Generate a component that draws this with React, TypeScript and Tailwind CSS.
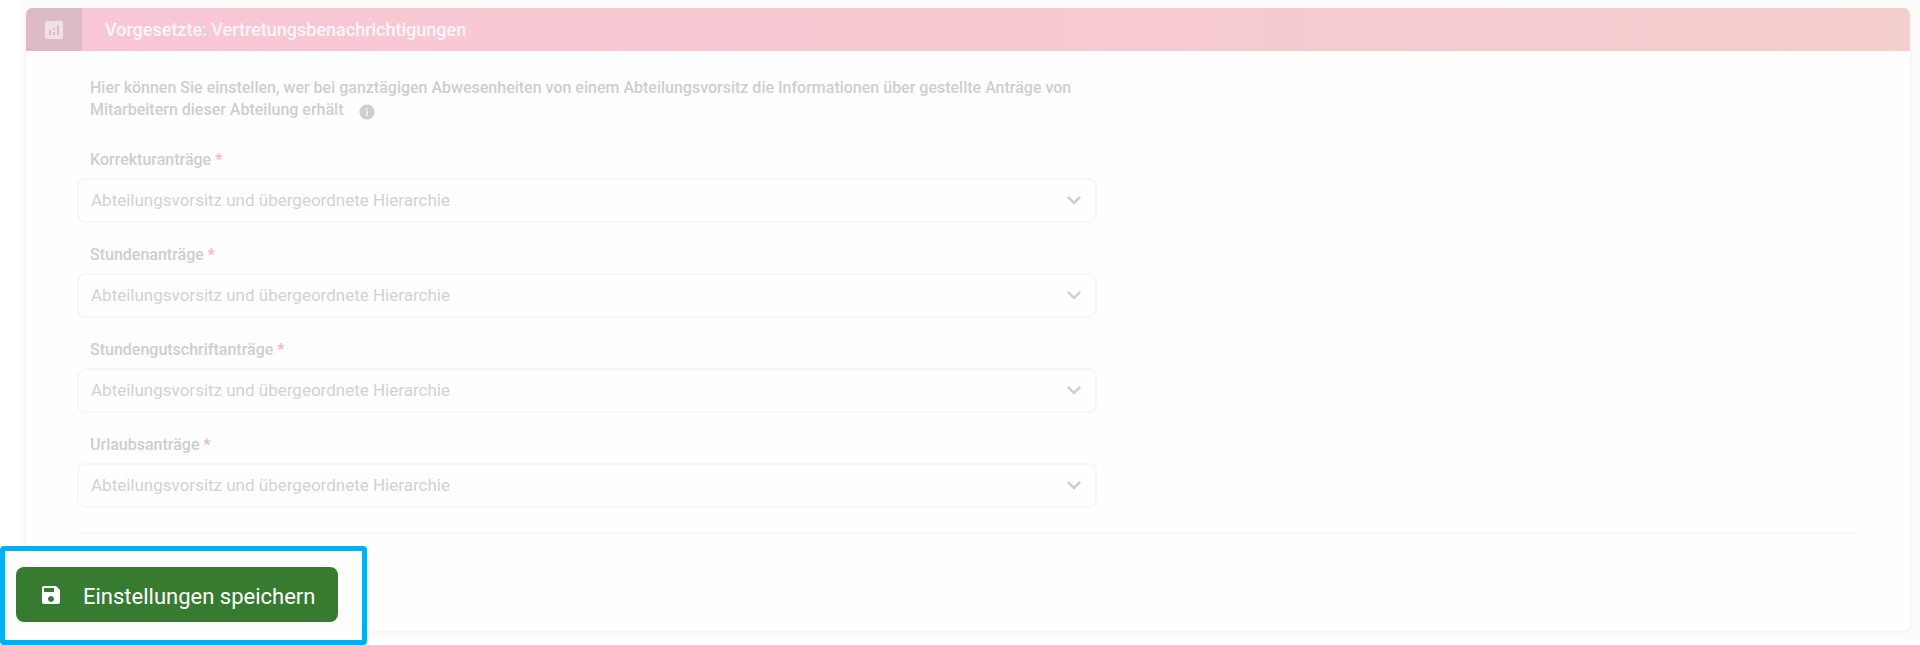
import { useState } from 'react';
import { MdAnalytics, MdExpandMore, MdInfo, MdSave } from 'react-icons/md';

const fields = [
  { id: 'korrektur', label: 'Korrekturanträge' },
  { id: 'stunden', label: 'Stundenanträge' },
  { id: 'gutschrift', label: 'Stundengutschriftanträge' },
  { id: 'urlaub', label: 'Urlaubsanträge' },
];

const options = ['Abteilungsvorsitz und übergeordnete Hierarchie', 'Abteilungsvorsitz', 'Übergeordnete Hierarchie'];

const SelectField = ({ id, label }: { id: string; label: string }) => {
  const [value, setValue] = useState(options[0]);

  return (
    <div>
      <label htmlFor={id} className="block pl-[13px] text-base leading-6 font-medium text-[#cecece]">
        {label} <span className="text-[#f8b4b4]">*</span>
      </label>
      <div className="relative mt-1.5">
        <select
          id={id}
          value={value}
          onChange={(e) => setValue(e.target.value)}
          className="block h-[45px] w-full appearance-none rounded-lg border-2 border-[#f7f7f7] bg-[#fefefe] pr-12 pl-3 text-[17px] text-[#d2d2d2]"
        >
          {options.map((option) => (
            <option key={option}>{option}</option>
          ))}
        </select>
        <MdExpandMore className="pointer-events-none absolute top-2 right-[9px] size-7 text-[#cfcfd1]" />
      </div>
    </div>
  );
};

export default function App() {
  return (
    <main className="relative bg-white pb-[5px] pl-5 font-['Roboto',sans-serif]">
      <div className="bg-[#fcfcfc] pt-2 pr-2 pb-[7px] pl-1">
        {/* Settings card */}
        <section className="overflow-hidden rounded-lg border-x-2 border-b-2 border-[#f7f7f7] bg-[#fefefe]">
          <header className="flex h-[43px] items-stretch bg-gradient-to-r from-[#f9c6d5] to-[#f5cece]">
            <div className="flex w-14 items-center justify-center bg-[#dcbbc6]">
              <MdAnalytics className="size-6 text-[#f0dfe5]" />
            </div>
            <h2 className="self-center pl-[23px] text-lg font-medium text-[#fff6f9]">
              Vorgesetzte: Vertretungsbenachrichtigungen
            </h2>
          </header>

          <div className="pr-[51px] pl-[51px]">
            <form id="settings" className="w-full max-w-[1020px] pt-[26px]">
              <p className="pl-[13px] text-base leading-[22px] font-medium text-[#cecece]">
                Hier können Sie einstellen, wer bei ganztägigen Abwesenheiten von einem Abteilungsvorsitz die
                Informationen über gestellte Anträge von Mitarbeitern dieser Abteilung erhält
                <MdInfo className="ml-3.5 inline size-[18px] align-[-6px] text-[#cecece]" />
              </p>
              <div className="mt-[27px] flex flex-col gap-5">
                {fields.map((field) => (
                  <SelectField key={field.id} id={field.id} label={field.label} />
                ))}
              </div>
            </form>
            <hr className="mt-6 mb-[97px] border-t-2 border-[#f7f7f7]" />
          </div>
        </section>
      </div>

      {/* Highlighted save action */}
      <div className="absolute bottom-0 left-0 rounded-sm border-[5px] border-[#00b0f0] bg-[#fefefe] pt-4 pr-6 pb-[18px] pl-[11px]">
        <button
          type="submit"
          form="settings"
          className="flex h-[55px] items-center rounded-lg bg-[#367b30] px-[23px] text-[22px] text-white"
        >
          <MdSave className="mr-5 size-6" />
          <span className="pt-1">Einstellungen speichern</span>
        </button>
      </div>
    </main>
  );
}
